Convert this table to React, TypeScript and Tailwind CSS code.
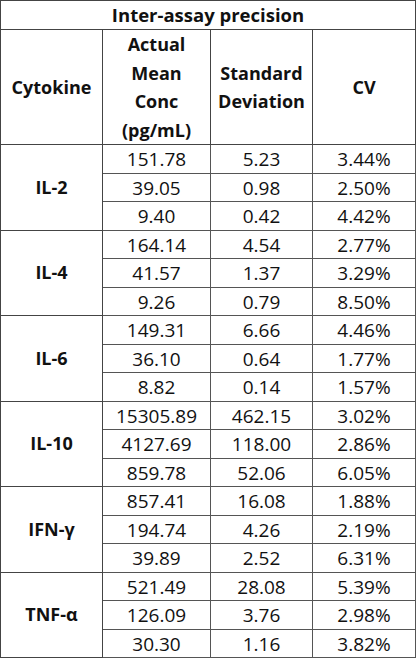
import React from 'react';

type Group = { name: string; rows: [string, string, string][] };

const groups: Group[] = [
  { name: 'IL-2', rows: [['151.78', '5.23', '3.44%'], ['39.05', '0.98', '2.50%'], ['9.40', '0.42', '4.42%']] },
  { name: 'IL-4', rows: [['164.14', '4.54', '2.77%'], ['41.57', '1.37', '3.29%'], ['9.26', '0.79', '8.50%']] },
  { name: 'IL-6', rows: [['149.31', '6.66', '4.46%'], ['36.10', '0.64', '1.77%'], ['8.82', '0.14', '1.57%']] },
  { name: 'IL-10', rows: [['15305.89', '462.15', '3.02%'], ['4127.69', '118.00', '2.86%'], ['859.78', '52.06', '6.05%']] },
  { name: 'IFN-γ', rows: [['857.41', '16.08', '1.88%'], ['194.74', '4.26', '2.19%'], ['39.89', '2.52', '6.31%']] },
  { name: 'TNF-α', rows: [['521.49', '28.08', '5.39%'], ['126.09', '3.76', '2.98%'], ['30.30', '1.16', '3.82%']] },
];

export default function App() {
  return (
    <div className="w-[416px] h-[658px] bg-white font-['Open_Sans',sans-serif] text-[#111]">
      <table className="w-[415px] table-fixed border-collapse text-center text-[18px]">
        <colgroup>
          <col className="w-[102px]" />
          <col className="w-[108px]" />
          <col className="w-[102px]" />
          <col className="w-[103px]" />
        </colgroup>
        <thead>
          {/* Title */}
          <tr className="h-[29px]">
            <th colSpan={4} className="border border-[#444] font-bold text-[18.5px] leading-none p-0">
              Inter-assay precision
            </th>
          </tr>
          <tr className="h-[114px]">
            <th className="border border-[#444] font-bold p-0">Cytokine</th>
            <th className="border border-[#444] font-bold leading-[28.5px] p-0">
              Actual
              <br />
              Mean
              <br />
              Conc
              <br />
              (pg/mL)
            </th>
            <th className="border border-[#444] font-bold leading-[28.5px] p-0">
              Standard
              <br />
              Deviation
            </th>
            <th className="border border-[#444] font-bold p-0">CV</th>
          </tr>
        </thead>
        <tbody>
          {groups.map((g) =>
            g.rows.map((r, i) => (
              <tr key={g.name + i} className="h-[28.5px]">
                {i === 0 && (
                  <td rowSpan={3} className="border border-[#444] font-bold p-0">
                    {g.name}
                  </td>
                )}
                {r.map((v, j) => (
                  <td key={j} className="border border-[#555] text-[19px] leading-none p-0 pt-[2px]">
                    {v}
                  </td>
                ))}
              </tr>
            ))
          )}
        </tbody>
      </table>
    </div>
  );
}
